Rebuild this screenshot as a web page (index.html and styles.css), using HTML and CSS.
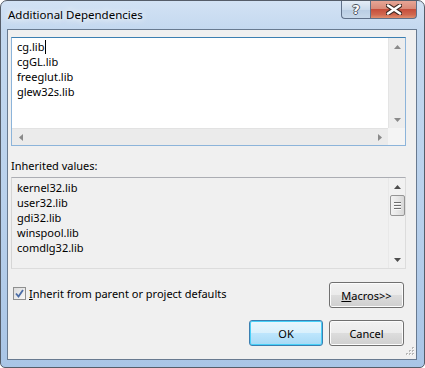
FILE: index.html
```html
<!DOCTYPE html>
<html lang="en">
<head>
  <meta charset="UTF-8">
  <title>Additional Dependencies</title>
  <link rel="stylesheet" href="styles.css">
</head>
<body>
  <div class="window">
    <div class="titlebar">
      <span class="title">Additional Dependencies</span>
      <div class="caption-btns">
        <span class="help">?</span>
        <span class="close">
          <svg width="16" height="11" viewBox="0 0 16 11">
            <path d="M2 1.5 L14 9.5 M14 1.5 L2 9.5" stroke="#3b2620" stroke-width="4.6" stroke-linecap="round"/>
            <path d="M2 1.5 L14 9.5 M14 1.5 L2 9.5" stroke="#fff" stroke-width="2.6" stroke-linecap="round"/>
          </svg>
        </span>
      </div>
    </div>

    <div class="client">
      <div class="textbox edit">
        <div class="area">
          <div class="lines">
            <div>cg.lib<span class="caret"></span></div>
            <div>cgGL.lib</div>
            <div>freeglut.lib</div>
            <div>glew32s.lib</div>
          </div>
          <div class="vscroll">
            <span class="arrow"><svg width="7" height="4"><polygon points="0,4 3.5,0 7,4" fill="#8a8a8a"/></svg></span>
            <span class="track"></span>
            <span class="arrow"><svg width="7" height="4"><polygon points="0,0 7,0 3.5,4" fill="#8a8a8a"/></svg></span>
          </div>
        </div>
        <div class="bottom">
          <div class="hscroll">
            <span class="arrow"><svg width="4" height="7"><polygon points="4,0 4,7 0,3.5" fill="#8a8a8a"/></svg></span>
            <span class="track"></span>
            <span class="arrow"><svg width="4" height="7"><polygon points="0,0 0,7 4,3.5" fill="#8a8a8a"/></svg></span>
          </div>
          <div class="corner"></div>
        </div>
      </div>

      <div class="label">Inherited values:</div>

      <div class="textbox readonly">
        <div class="area">
          <div class="lines">
            <div>kernel32.lib</div>
            <div>user32.lib</div>
            <div>gdi32.lib</div>
            <div>winspool.lib</div>
            <div>comdlg32.lib</div>
          </div>
          <div class="vscroll">
            <span class="arrow"><svg width="7" height="4"><polygon points="0,4 3.5,0 7,4" fill="#4d4d4d"/></svg></span>
            <span class="thumb"><i></i><i></i><i></i></span>
            <span class="track"></span>
            <span class="arrow"><svg width="7" height="4"><polygon points="0,0 7,0 3.5,4" fill="#4d4d4d"/></svg></span>
          </div>
        </div>
      </div>

      <div class="options">
        <label class="check">
          <span class="box"><svg width="9" height="9" viewBox="0 0 9 9"><path d="M1 4.5 L3.5 7.5 L8 1" fill="none" stroke="#4a6ca6" stroke-width="1.8"/></svg></span>
          <span><u>I</u>nherit from parent or project defaults</span>
        </label>
        <button class="btn"><u>M</u>acros&gt;&gt;</button>
      </div>

      <div class="actions">
        <button class="btn ok">OK</button>
        <button class="btn">Cancel</button>
      </div>

      <svg class="grip" width="11" height="11" viewBox="0 0 11 11">
        <g fill="#b7b7b7">
          <rect x="8" y="0" width="2" height="2"/>
          <rect x="5" y="3" width="2" height="2"/><rect x="8" y="3" width="2" height="2"/>
          <rect x="2" y="6" width="2" height="2"/><rect x="5" y="6" width="2" height="2"/><rect x="8" y="6" width="2" height="2"/>
        </g>
        <g fill="#fff">
          <rect x="9" y="1" width="1" height="1"/>
          <rect x="6" y="4" width="1" height="1"/><rect x="9" y="4" width="1" height="1"/>
          <rect x="3" y="7" width="1" height="1"/><rect x="6" y="7" width="1" height="1"/><rect x="9" y="7" width="1" height="1"/>
        </g>
      </svg>
    </div>
  </div>
</body>
</html>
```

FILE: styles.css
```css
body { margin: 0; background: #fff; font-family: "Noto Sans", "Open Sans", sans-serif; font-size: 11px; color: #000; }
.window { width: 425px; height: 368px; box-sizing: border-box; border: 1px solid #555d69; border-radius: 7px 7px 5px 5px; padding: 0 7px 7px 6px; display: flex; flex-direction: column; background: linear-gradient(180deg, #d2e2f4 0px, #c3d8ef 30px, #b9d1ec 200px, #a9c5e6 368px); }
.titlebar { height: 28px; display: flex; justify-content: space-between; align-items: flex-start; }
.title { padding: 6px 0 0 1px; line-height: 16px; font-size: 11.5px; text-shadow: 0 0 6px #fff, 0 0 10px #fff; }
.caption-btns { display: flex; margin-right: 0; }
.caption-btns span { height: 18px; box-sizing: border-box; display: flex; align-items: center; justify-content: center; border: 1px solid #5f7088; border-top: none; }
.help { width: 29px; border-right: none !important; border-radius: 0 0 0 4px; background: linear-gradient(180deg, #e4edf7, #cbdbec 50%, #b9cde3 51%, #c7d8ea); color: #fff; font-weight: bold; font-size: 13px; font-family: "DejaVu Sans", sans-serif; text-shadow: 1px 0 #4c5560, -1px 0 #4c5560, 0 1px #4c5560, 0 -1px #4c5560; }
.close { width: 47px; border-radius: 0 0 4px 0; background: linear-gradient(180deg, #e7a696, #d98b79 45%, #c64f3c 50%, #d0674f 80%, #e08f6f); }

.client { flex: 1; position: relative; background: #f0f0f0; border: 1px solid #687a90; padding: 7px 10px 0 3px; }

.textbox { box-sizing: border-box; display: flex; flex-direction: column; border: 1px solid; }
.textbox.edit { height: 109px; background: #fff; border-color: #3c7fb1 #8cb4da #8cb4da #8cb4da; }
.textbox.readonly { height: 92px; background: #f0f0f0; border-color: #abadb3 #dcdcdc #dcdcdc #d5d5d5; }
.area { flex: 1; display: flex; min-height: 0; }
.lines { flex: 1; padding: 1px 0 0 5px; line-height: 15px; }
.readonly .lines { padding-top: 2px; }
.caret { display: inline-block; width: 1px; height: 14px; background: #000; vertical-align: -3px; margin-left: 1px; }

.vscroll { width: 17px; display: flex; flex-direction: column; align-items: center; background: #ededed; border-left: 1px solid #e4e4e4; box-sizing: border-box; }
.readonly .vscroll { background: #f1f1f1; border-left-color: #e8e8e8; }
.vscroll .arrow { height: 17px; display: flex; align-items: center; justify-content: center; }
.vscroll .track { flex: 1; }
.thumb { width: 15px; height: 21px; box-sizing: border-box; border: 1px solid #959595; border-radius: 2px; background: linear-gradient(90deg, #f3f3f3, #e7e7e7 50%, #d8d8d8); display: flex; flex-direction: column; align-items: center; justify-content: center; gap: 1px; }
.thumb i { width: 7px; height: 1px; background: #6e6e6e; border-bottom: 1px solid #fafafa; }

.bottom { height: 17px; display: flex; }
.hscroll { flex: 1; display: flex; align-items: center; background: #ebebeb; border-top: 1px solid #e2e2e2; }
.hscroll .arrow { width: 17px; display: flex; justify-content: center; }
.hscroll .track { flex: 1; }
.corner { width: 17px; background: #f4f4f4; }

.label { margin-top: 12px; line-height: 15px; margin-bottom: 4px; }

.options { display: flex; justify-content: space-between; align-items: flex-start; margin: 13px 2px 0 0; }
.check { display: flex; align-items: center; gap: 3px; margin: 4px 0 0 2px; line-height: 15px; }
.box { width: 13px; height: 13px; box-sizing: border-box; border: 1px solid #8e8f8f; background: linear-gradient(135deg, #dcdcdc, #f7f7f7); display: flex; align-items: center; justify-content: center; }

.btn { width: 75px; height: 26px; box-sizing: border-box; font: inherit; color: #000; border: 1px solid #707070; border-radius: 3px; background: linear-gradient(180deg, #f2f2f2, #ebebeb 49%, #dddddd 50%, #cfcfcf); box-shadow: inset 0 0 0 1px #fcfcfc; padding: 0; }
.actions { display: flex; justify-content: flex-end; gap: 6px; margin: 12px 2px 0 0; }
.btn.ok { width: 74px; border-color: #3c7fb1; background: linear-gradient(180deg, #eaf6fd, #d9f0fc 49%, #bee6fd 50%, #a7d9f5); box-shadow: inset 0 0 0 1px #48d0f8; }
.grip { position: absolute; right: 1px; bottom: 1px; }
```
